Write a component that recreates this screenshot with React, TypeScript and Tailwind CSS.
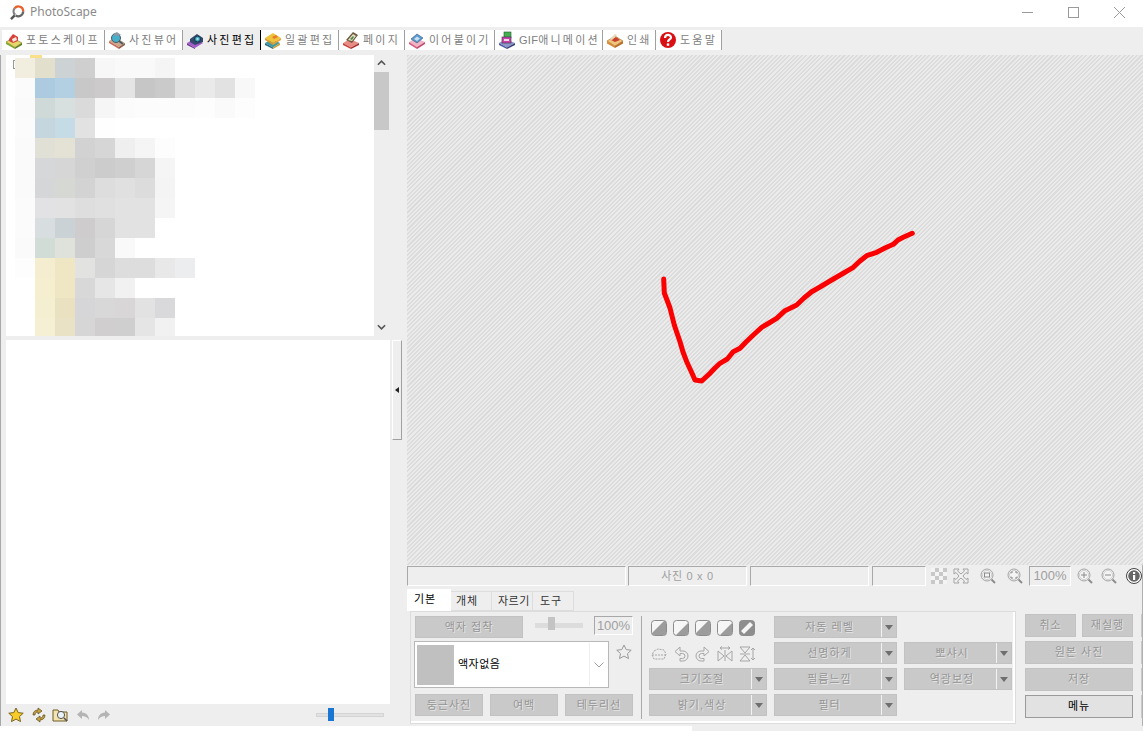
import React from 'react';

const pixelRows: string[][] = [
  ['#f1eee0', '#e2e0cc', '#cdd2d4', '#cfcfcf', '#f7f7f7', '#f9f9f9', '#f9f9f9', '#f5f5f5'],
  ['#fbfbfb', '#adcbe0', '#b3cfe2', '#c8c8c8', '#cccaca', '#e4e4e4', '#c6c6c6', '#cacaca', '#e2e2e2', '#eaeaea', '#e2e2e2', '#f8f8f8'],
  ['#fafafa', '#cfd9d8', '#d8dfdf', '#dadada', '#f6f6f6', '#fbfbfb', '#fcfcfc', '#fcfcfc', '#fcfcfc', '#fdfdfd', '#fafafa', '#fdfdfd'],
  ['#fbfbfb', '#c5d6df', '#c5dbe6', '#e2e2e2', '#fefefe'],
  ['#fafafa', '#e0e0d6', '#e4e2d4', '#d2d2d2', '#d6d6d6', '#efefef', '#f5f5f5', '#fdfdfd'],
  ['#fafafa', '#d6d7d9', '#d6d6d6', '#d0d0d0', '#cccccc', '#cfcfcf', '#d6d6d6', '#f5f5f5'],
  ['#fafafa', '#d5d6d8', '#d6d8d4', '#d3d3d3', '#dddddd', '#e0e0e0', '#dcdcdc', '#f4f4f4'],
  ['#fbfbfb', '#e2e2e4', '#e2e2e2', '#dedede', '#e0e0e0', '#e2e2e2', '#e2e2e2', '#f5f5f5'],
  ['#fbfbfb', '#d8dde0', '#cad2d5', '#cecccc', '#d6d6d6', '#e2e2e2', '#e2e2e2'],
  ['#fafafa', '#d2dcd6', '#dee2da', '#cecece', '#d8d8d8', '#f9f9f9'],
  ['#fdfdfd', '#f4edd0', '#efe6c4', '#e2e2e0', '#d6d6d6', '#dddddd', '#dddddd', '#e8e8e8', '#ecedef'],
  ['#ffffff', '#f5eecf', '#efe7c3', '#d8d8d8', '#e6e6e6', '#f1f1f1'],
  ['#ffffff', '#f5efd2', '#e9e1bf', '#d6d6d8', '#d8d8d8', '#d8d6d6', '#e2e2e2', '#d9d9db'],
  ['#ffffff', '#f5efd3', '#eae2c4', '#d6d6d6', '#d0cece', '#cfcfcf', '#e5e5e5', '#f1f1f1'],
];

const checkPoints =
  '663.7,279 664,286 664.3,293 667,300 670,308 672,316 674.3,325 677,333 680,341.7 683,352 686.7,361.7 691,371 695,380 701.7,381 706,377 710,373.3 715,368 720,363.3 727.3,359 733.3,351.7 740,348.3 746,342 753.3,335 761.7,327.3 769,323 776.7,318.3 785,310.7 796.7,305 804,298 811.7,291.7 820,287 830,281 842,274 853.3,267.3 860,261 866.7,255.7 876.7,252.3 885,248 893.3,244.3 898,240 903.3,237.3 912.3,233.3';

// Small isometric app icons for the top tabs
const TabIcon = ({ kind }: { kind: string }) => {
  const shell = 'w-[18px] h-[18px] shrink-0';
  switch (kind) {
    case 'home':
      return (
        <svg viewBox="0 0 18 18" className={shell}>
          <polygon points="1,11 8,7 17,12 10,16.500" fill="#e6d568" stroke="#6b7a2a" strokeWidth="0.6" />
          <polygon points="1,11 10,16.500 10,18 1,13" fill="#7fa52e" />
          <polygon points="10,16.500 17,12 17,14 10,18" fill="#5b7f22" />
          <polygon points="4,8 8,3 13,6 13,10 8,12 4,10" fill="#d8423a" />
          <polygon points="7,8 11,6 12,9 8,11" fill="#f4e9e0" />
        </svg>
      );
    case 'viewer':
      return (
        <svg viewBox="0 0 18 18" className={shell}>
          <polygon points="1,10 7,6 17,12 11,16" fill="#c9a78a" />
          <polygon points="1,10 11,16 11,18 1,12" fill="#c86b5a" />
          <polygon points="11,16 17,12 17,14 11,18" fill="#8f5a4a" />
          <circle cx="8" cy="7" r="4.500" fill="#48b0c8" stroke="#4a5a68" />
          <polygon points="5,3 9,1 13,4 8,5" fill="#8c9aa8" />
          <line x1="11" y1="10" x2="15" y2="13" stroke="#4a5a68" strokeWidth="1.600" />
        </svg>
      );
    case 'editor':
      return (
        <svg viewBox="0 0 18 18" className={shell}>
          <polygon points="1,12 8,8 17,12 9,17" fill="#a45cc8" />
          <polygon points="1,12 9,17 9,18 1,14" fill="#6e3a98" />
          <polygon points="4,8 11,3 17,7 17,11 9,14 4,11" fill="#34486e" />
          <circle cx="11.500" cy="8" r="3" fill="#2fa3b8" stroke="#1f2f48" />
          <circle cx="11.500" cy="8" r="1.200" fill="#a8e0e8" />
        </svg>
      );
    case 'batch':
      return (
        <svg viewBox="0 0 18 18" className={shell}>
          <polygon points="1,12 8,8 16,12 9,16.500" fill="#3f9aa8" />
          <polygon points="1,12 9,16.500 9,18 1,14" fill="#2a6f80" />
          <polygon points="9,16.500 16,12 16,14 9,18" fill="#c8a030" />
          <polygon points="1,7 9,2 17,7 9,12" fill="#f0c43a" />
          <polygon points="1,7 9,12 9,14 1,9" fill="#d89a28" />
          <polygon points="9,12 17,7 17,9 9,14" fill="#e8a030" />
          <polygon points="8,6 12,4 14,6 10,8" fill="#e87a2a" />
        </svg>
      );
    case 'page':
      return (
        <svg viewBox="0 0 18 18" className={shell}>
          <polygon points="1,12 8,8 17,12 9,16.500" fill="#e88c86" />
          <polygon points="1,12 9,16.500 9,18 1,14" fill="#c8403a" />
          <polygon points="9,16.500 17,12 17,14 9,18" fill="#a8302c" />
          <polygon points="4,9 11,1 16,4 10,12" fill="#6a5a3a" />
          <polygon points="6,9 11,3 14,5 10,10" fill="#e8e0c8" />
          <polygon points="8,8 11,5 12,6 10,9" fill="#4a8a4a" />
        </svg>
      );
    case 'combine':
      return (
        <svg viewBox="0 0 18 18" className={shell}>
          <polygon points="1,11 8,7 17,11 9,16" fill="#f0b4c4" />
          <polygon points="1,11 9,16 9,18 1,13" fill="#d85a80" />
          <polygon points="9,16 17,11 17,13 9,18" fill="#c04a70" />
          <polygon points="3,8 9,3 15,7 9,12" fill="#5a9ad0" stroke="#34587e" strokeWidth="0.6" />
          <polygon points="6,8 9,5.500 12,7.500 9,10" fill="#c8e0f0" />
        </svg>
      );
    case 'gif':
      return (
        <svg viewBox="0 0 18 18" className={shell}>
          <polygon points="1,12 8,8 17,12 9,16.500" fill="#8f96c8" />
          <polygon points="1,12 9,16.500 9,18 1,14" fill="#48589c" />
          <polygon points="9,16.500 17,12 17,14 9,18" fill="#343f78" />
          <rect x="6" y="1" width="7" height="6" fill="#46b050" stroke="#1f5a28" strokeWidth="0.6" />
          <rect x="4" y="6" width="9" height="6" fill="#c848a8" stroke="#3a2a4a" strokeWidth="0.6" />
          <rect x="6" y="8" width="5" height="2" fill="#f0d8e8" />
        </svg>
      );
    case 'print':
      return (
        <svg viewBox="0 0 18 18" className={shell}>
          <polygon points="1,10 9,5 17,10 9,15" fill="#f0c47a" stroke="#a06a2a" strokeWidth="0.6" />
          <polygon points="1,10 9,15 9,17 1,12.500" fill="#d88a38" />
          <polygon points="9,15 17,10 17,12.500 9,17" fill="#b86e28" />
          <polygon points="5,9 10,6 14,9 9,11" fill="#c8402f" />
          <polygon points="4,8 9,3 11,4 6,9" fill="#e8d8b8" />
        </svg>
      );
    default:
      return (
        <svg viewBox="0 0 18 18" className={shell}>
          <circle cx="9" cy="9" r="8" fill="#d90f14" />
          <path d="M6 7c0-4 6-4 6-.5 0 2-3 2-3 4.500" fill="none" stroke="#fff" strokeWidth="2.200" />
          <rect x="7.800" y="12.400" width="2.400" height="2.400" fill="#fff" />
        </svg>
      );
  }
};

const tabs = [
  { label: '포토스케이프', kind: 'home', w: 'w-[103px]' },
  { label: '사진뷰어', kind: 'viewer', w: 'w-[78px]' },
  { label: '사진편집', kind: 'editor', w: 'w-[78px]', active: true },
  { label: '일괄편집', kind: 'batch', w: 'w-[78px]' },
  { label: '페이지', kind: 'page', w: 'w-[66px]' },
  { label: '이어붙이기', kind: 'combine', w: 'w-[90px]' },
  { label: '애니메이션', prefix: 'GIF', kind: 'gif', w: 'w-[108px]' },
  { label: '인쇄', kind: 'print', w: 'w-[53px]' },
  { label: '도움말', kind: 'help', w: 'w-[66px]' },
];

const GrayButton = ({ label, className }: { label: string; className: string }) => (
  <div
    className={`${className} flex items-center justify-center bg-[#c9c9c9] border border-[#c2c2c2] text-[11px] tracking-[1px] text-[#969696] [text-shadow:1px_1px_0_#e6e6e6]`}
  >
    {label}
  </div>
);

const DropButton = ({ label, className }: { label: string; className: string }) => (
  <div className={`${className} flex h-[22px] bg-[#c9c9c9] border border-[#c2c2c2]`}>
    <div className="flex-1 flex items-center justify-center pl-[3px] text-[11px] tracking-[1px] text-[#969696] [text-shadow:1px_1px_0_#e6e6e6]">
      {label}
    </div>
    <div className="w-[15px] border-l border-l-[#f2f2f2] flex items-center justify-center">
      <svg viewBox="0 0 8 5" className="w-[8px] h-[5px]">
        <polygon points="0,0 8,0 4,5" fill="#6e6e6e" />
      </svg>
    </div>
  </div>
);

const SunkenCell = ({ className, children }: { className: string; children?: React.ReactNode }) => (
  <div
    className={`${className} h-[20px] flex items-center justify-center border border-t-[#a8a8a8] border-l-[#a8a8a8] border-r-white border-b-white text-[11px] tracking-[0.7px] text-[#a0a0a0]`}
  >
    {children}
  </div>
);

const Corner = ({ points, dark }: { points: string; dark?: boolean }) => (
  <svg viewBox="0 0 16 16" className="w-[16px] h-[16px]">
    <rect x="0.500" y="0.500" width="15" height="15" rx="3" fill={dark ? '#8e8e8e' : '#f6f6f6'} stroke="#8c8c8c" />
    <polygon points={points} fill={dark ? '#f6f6f6' : '#9c9c9c'} />
  </svg>
);

const ToolGlyph = ({ children }: { children: React.ReactNode }) => (
  <svg viewBox="0 0 16 16" className="w-[16px] h-[16px]" fill="none" stroke="#a6a6a6" strokeWidth="1">
    {children}
  </svg>
);

const Magnifier = ({ children }: { children?: React.ReactNode }) => (
  <svg viewBox="0 0 16 16" className="w-[16px] h-[16px]" fill="none" stroke="#a4a4a4">
    <circle cx="7" cy="7" r="6" fill="#f4f4f4" />
    <circle cx="7" cy="7" r="4.600" stroke="#d0d0d0" />
    {children}
    <line x1="11.500" y1="11.500" x2="15" y2="15" stroke="#8a8a8a" strokeWidth="1.800" />
  </svg>
);

export default function App() {
  return (
    <div className="w-[1143px] h-[731px] flex flex-col overflow-hidden bg-[#eeeeee] font-['Liberation_Sans','Noto_Sans_CJK_KR',sans-serif]">
      {/* Title bar */}
      <div className="h-[27px] shrink-0 bg-white flex items-center pl-[10px] pb-[3px]">
        <svg viewBox="0 0 16 16" className="w-[15px] h-[15px]">
          <path d="M5 3.500A5 5 0 0 1 14 7" fill="none" stroke="#e8602a" strokeWidth="2.400" />
          <path d="M14 7a5 5 0 0 1-8 4" fill="none" stroke="#666666" strokeWidth="2.400" />
          <path d="M5 3.500A5 5 0 0 0 5.500 10.500" fill="none" stroke="#808080" strokeWidth="2.400" />
          <line x1="5" y1="11" x2="1" y2="15" stroke="#555555" strokeWidth="2.600" />
        </svg>
        <span className="ml-[5px] text-[12px] text-[#8a8a8a] font-['Noto_Sans',sans-serif]">PhotoScape</span>
        <div className="ml-auto flex items-center gap-[35px] pr-[18px]">
          <svg viewBox="0 0 11 11" className="w-[11px] h-[11px]">
            <line x1="0" y1="5.500" x2="11" y2="5.500" stroke="#9a9a9a" />
          </svg>
          <svg viewBox="0 0 11 11" className="w-[11px] h-[11px]">
            <rect x="0.500" y="0.500" width="10" height="10" fill="none" stroke="#9a9a9a" />
          </svg>
          <svg viewBox="0 0 11 11" className="w-[11px] h-[11px]">
            <path d="M0 0l11 11M11 0L0 11" stroke="#9a9a9a" />
          </svg>
        </div>
      </div>

      {/* Module tabs */}
      <div className="h-[28px] shrink-0 flex items-start pt-[3px] pl-[2px]">
        {tabs.map((t) => (
          <div
            key={t.label}
            className={`${t.w} h-[20px] shrink-0 flex items-center gap-[3px] pl-[3px] border-r ${
              t.active ? 'bg-[#eeeeee] border-r-black text-black' : 'bg-white border-r-[#a0a0a0] text-[#808080]'
            }`}
          >
            <TabIcon kind={t.kind} />
            <span className="text-[11px] tracking-[2.200px] whitespace-nowrap">
              {t.prefix && <span className="tracking-[0.300px]">{t.prefix}</span>}
              {t.label}
            </span>
          </div>
        ))}
      </div>

      <div className="h-[671px] shrink-0 flex">
        {/* Left column: folder tree and thumbnails */}
        <div className="w-[407px] shrink-0 flex flex-col border-l border-l-[#a8a8a8] pl-[5px]">
          <div className="h-[281px] shrink-0 flex">
            <div className="relative w-[368px] bg-white pt-[3px] pl-[9px] overflow-hidden">
              <div className="absolute left-[7px] top-[5px] w-[2px] h-[9px] border-l border-y border-[#999999]" />
              <div className="absolute left-[24px] top-0 w-[12px] h-[3px] bg-[#fbe08c]" />
              {pixelRows.map((row, i) => (
                <div key={i} className="flex h-[20px]">
                  {row.map((c, j) => (
                    <div key={j} className="w-[20px] h-[20px]" style={{ backgroundColor: c }} />
                  ))}
                </div>
              ))}
            </div>
            <div className="w-[15px] flex flex-col items-center">
              <svg viewBox="0 0 10 6" className="w-[9px] h-[6px] mt-[5px] mb-[6px]">
                <path d="M1 5l4-4 4 4" fill="none" stroke="#555555" strokeWidth="1.800" />
              </svg>
              <div className="w-[15px] h-[58px] bg-[#c8c8c8]" />
              <svg viewBox="0 0 10 6" className="w-[9px] h-[6px] mt-auto mb-[6px]">
                <path d="M1 1l4 4 4-4" fill="none" stroke="#555555" strokeWidth="1.800" />
              </svg>
            </div>
          </div>

          <div className="mt-[4px] h-[364px] shrink-0 flex">
            <div className="w-[384px] bg-white" />
            <div className="ml-[2px] w-[10px] h-[100px] border border-t-white border-l-white border-r-[#a0a0a0] border-b-[#a0a0a0] flex items-center justify-center">
              <svg viewBox="0 0 4 6" className="w-[4px] h-[6px]">
                <polygon points="4,0 4,6 0,3" fill="#222222" />
              </svg>
            </div>
          </div>

          <div className="h-[22px] shrink-0 flex items-center pl-[2px]">
            <svg viewBox="0 0 16 16" className="w-[16px] h-[16px]">
              <polygon
                points="8,1 10.200,5.600 15.200,6.200 11.500,9.600 12.500,14.600 8,12.100 3.500,14.600 4.500,9.600 0.800,6.200 5.800,5.600"
                fill="#f8cc28"
                stroke="#7a6420"
              />
            </svg>
            <svg viewBox="0 0 16 16" className="ml-[7px] w-[16px] h-[16px]" fill="#c8a040" stroke="#5a4a1e" strokeWidth="0.700">
              <path d="M2 8c0-3 2-5 5-5V1l4 3-4 3V5C5 5 4 6 4 8z" />
              <path d="M14 8c0 3-2 5-5 5v2l-4-3 4-3v2c2 0 3-1 3-3z" />
            </svg>
            <svg viewBox="0 0 17 16" className="ml-[5px] w-[17px] h-[16px]">
              <path d="M1 3h5l1 2h8v9H1z" fill="#f3e3ae" stroke="#6e5c24" />
              <circle cx="9" cy="8" r="3.600" fill="#e8f2f8" stroke="#555555" />
              <line x1="12" y1="11" x2="15" y2="14" stroke="#555555" strokeWidth="1.600" />
            </svg>
            <svg viewBox="0 0 14 12" className="ml-[7px] w-[14px] h-[12px]">
              <path d="M6 1L1 5.500 6 10V7c3 0 5 1 7 4 0-4-2-7-7-7.500z" fill="#b4b4b4" />
            </svg>
            <svg viewBox="0 0 14 12" className="ml-[7px] w-[14px] h-[12px]">
              <path d="M8 1l5 4.500L8 10V7c-3 0-5 1-7 4 0-4 2-7 7-7.500z" fill="#b4b4b4" />
            </svg>
            {/* Thumbnail size slider */}
            <div className="relative ml-[205px] w-[68px] h-[4px] bg-[#e2e2e2] border border-[#d4d4d4]">
              <div className="absolute left-[11px] top-[-6px] w-[6px] h-[13px] bg-[#1976d2]" />
            </div>
          </div>
        </div>

        {/* Right column */}
        <div className="flex-1 min-w-0 flex flex-col">
          <div className="h-[510px] shrink-0 bg-[repeating-linear-gradient(135deg,#dcdcdc_0,#dcdcdc_1.500px,#ebebeb_1.500px,#ebebeb_3px)]">
            <svg viewBox="407 55 736 510" className="w-full h-full">
              <polyline
                points={checkPoints}
                fill="none"
                stroke="#fa0000"
                strokeWidth="5"
                strokeLinecap="round"
                strokeLinejoin="round"
              />
            </svg>
          </div>

          <div className="flex-1 flex flex-col border-r border-r-[#b0b0b0]">
            {/* Status strip */}
            <div className="mt-[1px] h-[20px] shrink-0 flex items-center">
              <SunkenCell className="w-[219px]" />
              <SunkenCell className="ml-[2px] w-[119px]">사진 0 x 0</SunkenCell>
              <SunkenCell className="ml-[3px] w-[119px]" />
              <SunkenCell className="ml-[3px] w-[54px]" />
              <div className="ml-[5px] w-[16px] h-[16px] bg-[repeating-conic-gradient(#c8c8c8_0_25%,#f4f4f4_0_50%)] bg-[length:8px_8px]" />
              <svg viewBox="0 0 16 16" className="ml-[6px] w-[16px] h-[16px]" fill="#f0f0f0" stroke="#a4a4a4">
                <path d="M1 1h5L4.500 3 8 6l3.500-3L10 1h5v5l-2-1.500L10 8l3 3.500L15 10v5h-5l1.500-2L8 10l-3.500 3L6 15H1v-5l2 1.500L6 8 3 4.500 1 6z" />
              </svg>
              <div className="ml-[11px]">
                <Magnifier>
                  <rect x="4.500" y="5" width="5" height="4" stroke="#8a8a8a" />
                </Magnifier>
              </div>
              <div className="ml-[11px]">
                <Magnifier>
                  <path d="M4 5.500V4h2M8 4h2v1.500M10 8.500V10H8M6 10H4V8.500" stroke="#8a8a8a" />
                </Magnifier>
              </div>
              <SunkenCell className="ml-[6px] w-[42px]">
                <span className="text-[13px] tracking-normal text-[#a0a0a0]">100%</span>
              </SunkenCell>
              <div className="ml-[6px]">
                <Magnifier>
                  <path d="M4 7h6M7 4v6" stroke="#8a8a8a" />
                </Magnifier>
              </div>
              <div className="ml-[8px]">
                <Magnifier>
                  <path d="M4 7h6" stroke="#8a8a8a" />
                </Magnifier>
              </div>
              <svg viewBox="0 0 16 16" className="ml-[9px] w-[16px] h-[16px]">
                <circle cx="8" cy="8" r="7.500" fill="#ffffff" stroke="#444444" />
                <circle cx="8" cy="8" r="5.800" fill="#666666" />
                <rect x="7" y="7" width="2.200" height="5" fill="#ffffff" />
                <rect x="7" y="4" width="2.200" height="2" fill="#ffffff" />
              </svg>
            </div>

            {/* Edit tabs */}
            <div className="mt-[3px] h-[22px] shrink-0 flex items-end text-[11px] tracking-[1px] text-[#333333]">
              <div className="w-[44px] h-[22px] bg-white flex items-center pl-[7px] pb-[2px] text-black">기본</div>
              <div className="w-[41px] h-[20px] flex items-center pl-[5px] border-y border-r border-[#dddddd]">개체</div>
              <div className="w-[41px] h-[20px] flex items-center pl-[6px] tracking-[0.500px] border-y border-r border-[#dddddd]">자르기</div>
              <div className="w-[41px] h-[20px] flex items-center pl-[7px] border-y border-r border-[#dddddd]">도구</div>
            </div>

            <div className="flex items-start">
              {/* Edit panel */}
              <div className="ml-[3px] w-[606px] h-[113px] shrink-0 flex border border-[#dcdcdc] shadow-[inset_-2px_-2px_0_#ffffff] pt-[4px] pl-[3px]">
                <div className="w-[220px] shrink-0 flex flex-col">
                  <div className="flex items-start pl-[1px]">
                    <GrayButton label="액자 접착" className="w-[108px] h-[22px]" />
                    <div className="relative ml-[12px] mt-[7px] w-[48px] h-[5px] bg-[#dcdcdc]">
                      <div className="absolute left-[13px] top-[-6px] w-[7px] h-[13px] bg-[#c4c4c4]" />
                    </div>
                    <div className="ml-[11px] w-[39px] h-[19px] flex items-center justify-center border border-t-[#a8a8a8] border-l-[#a8a8a8] border-r-white border-b-white text-[13px] text-[#a0a0a0]">
                      100%
                    </div>
                  </div>
                  <div className="mt-[3px] flex items-start">
                    <div className="w-[195px] h-[47px] flex items-center bg-white border border-[#b8b8b8] pl-[2px]">
                      <div className="w-[37px] h-[40px] bg-[#c0c0c0]" />
                      <span className="ml-[4px] text-[11px] tracking-[0.500px] text-black">액자없음</span>
                      <div className="ml-auto mr-[1px] w-[18px] h-[43px] border-l border-l-[#eeeeee] flex items-center justify-center">
                        <svg viewBox="0 0 10 6" className="w-[10px] h-[6px]">
                          <path d="M0.500 0.500L5 5l4.500-4.500" fill="none" stroke="#a0a0a0" />
                        </svg>
                      </div>
                    </div>
                    <svg viewBox="0 0 16 16" className="ml-[7px] mt-[3px] w-[16px] h-[16px]">
                      <polygon
                        points="8,1 10.200,5.600 15.200,6.200 11.500,9.600 12.500,14.600 8,12.100 3.500,14.600 4.500,9.600 0.800,6.200 5.800,5.600"
                        fill="none"
                        stroke="#9a9a9a"
                      />
                    </svg>
                  </div>
                  <div className="mt-[6px] flex gap-[7px] pl-[1px]">
                    <GrayButton label="둥근사진" className="w-[68px] h-[22px]" />
                    <GrayButton label="여백" className="w-[68px] h-[22px]" />
                    <GrayButton label="테두리선" className="w-[68px] h-[22px]" />
                  </div>
                </div>

                <div className="ml-[7px] w-px h-[103px] bg-[#a8a8a8]" />

                <div className="ml-[7px] w-[118px] shrink-0 flex flex-col">
                  <div className="h-[26px] flex gap-[6px] pl-[2px] pt-[4px]">
                    <Corner points="1,15 1,13 13,1 15,1 15,15" />
                    <Corner points="3,15 15,3 15,15" />
                    <Corner points="1,15 1,13 13,1 15,1 15,15" />
                    <Corner points="3,15 15,3 15,15" />
                    <Corner points="2,11 11,2 14,5 5,14" dark />
                  </div>
                  <div className="h-[26px] flex gap-[6px] pl-[2px] pt-[4px]">
                    <ToolGlyph>
                      <path d="M3 5l4-2 6 1 2 4-2 5H3L1 9zM1 9h14" strokeDasharray="2 1" />
                    </ToolGlyph>
                    <ToolGlyph>
                      <path d="M7 1L2 5.500 7 10V7.500h2.500a2.500 2.500 0 0 1 0 5H7V15h3a5 5 0 0 0 0-10H7z" />
                    </ToolGlyph>
                    <ToolGlyph>
                      <path d="M9 1l5 4.500L9 10V7.500H6.500a2.500 2.500 0 0 0 0 5H9V15H6A5 5 0 0 1 6 5h3z" />
                    </ToolGlyph>
                    <ToolGlyph>
                      <path d="M1 5l6 5-6 5zM15 5L9 10l6 5zM3 2h10M3 2l2-1.500M3 2l2 1.500M13 2l-2-1.500M13 2l-2 1.500M8 4v11" />
                    </ToolGlyph>
                    <ToolGlyph>
                      <path d="M1 1h10L6 7zM1 15h10L6 9zM1 8h10M14 2v12M14 2l-2 2M14 2l2 2M14 14l-2-2M14 14l2-2" />
                    </ToolGlyph>
                  </div>
                  <DropButton label="크기조절" className="w-[118px]" />
                  <DropButton label="밝기,색상" className="mt-[4px] w-[118px]" />
                </div>

                <div className="ml-[7px] w-[123px] shrink-0 flex flex-col gap-[4px]">
                  <DropButton label="자동 레벨" className="w-[123px]" />
                  <DropButton label="선명하게" className="w-[123px]" />
                  <DropButton label="필름느낌" className="w-[123px]" />
                  <DropButton label="필터" className="w-[123px]" />
                </div>

                <div className="ml-[7px] w-[108px] shrink-0 flex flex-col gap-[4px] pt-[26px]">
                  <DropButton label="뽀샤시" className="w-[108px]" />
                  <DropButton label="역광보정" className="w-[108px]" />
                </div>
              </div>

              {/* Save actions */}
              <div className="ml-[9px] mt-[3px] w-[108px] shrink-0 flex flex-col gap-[4px]">
                <div className="flex gap-[6px]">
                  <GrayButton label="취소" className="w-[51px] h-[23px]" />
                  <GrayButton label="재실행" className="w-[51px] h-[23px]" />
                </div>
                <GrayButton label="원본 사진" className="w-[108px] h-[23px]" />
                <GrayButton label="저장" className="w-[108px] h-[23px]" />
                <div className="w-[108px] h-[23px] flex items-center justify-center bg-[#e2e2e2] border border-[#9a9a9a] text-[11px] tracking-[1px] text-black">
                  메뉴
                </div>
              </div>

              {/* Clipped next column of buttons */}
              <div className="ml-[8px] mt-[3px] w-px flex flex-col gap-[4px]">
                <div className="h-[23px] bg-[#c9c9c9]" />
                <div className="h-[23px] bg-[#c9c9c9]" />
                <div className="h-[23px] bg-[#c9c9c9]" />
                <div className="h-[23px] bg-[#c9c9c9]" />
              </div>
            </div>
          </div>
        </div>
      </div>

      <div className="h-[5px] shrink-0 w-[692px] bg-white" />
    </div>
  );
}
